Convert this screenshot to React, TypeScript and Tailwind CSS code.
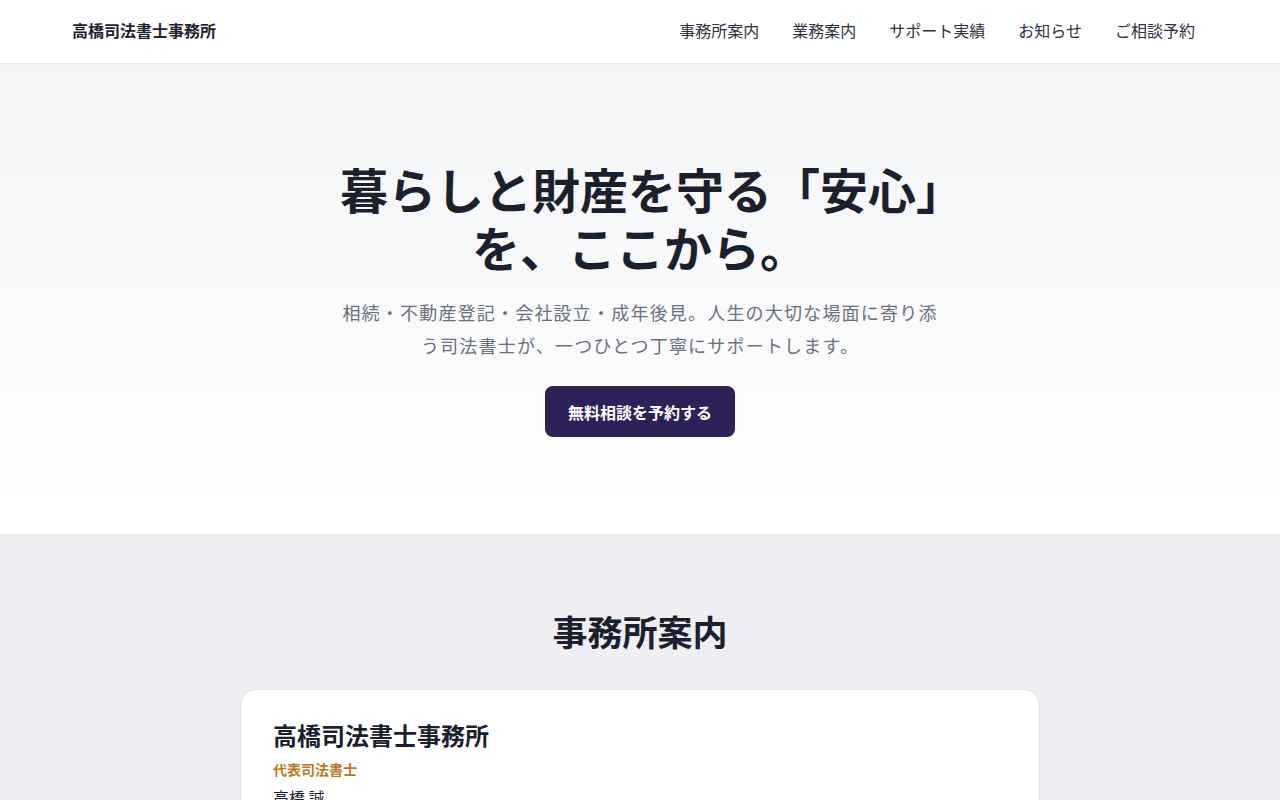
import React from "react";

export default function App() {
  const nav = ["事務所案内", "業務案内", "サポート実績", "お知らせ", "ご相談予約"];
  return (
    <div
      className="min-h-screen bg-white text-[#1c1f2e]"
      style={{ fontFamily: '"Noto Sans CJK JP", "Noto Sans", sans-serif' }}
    >
      <header className="h-16 bg-white border-b border-[#e5e7eb] flex items-center justify-between pl-[72px] pr-[85px] pb-1">
        <div className="text-base font-bold text-[#1f2330]">高橋司法書士事務所</div>
        <nav className="flex items-center gap-[33px]">
          {nav.map((n) => (
            <a key={n} className="text-base text-[#2d3140]" href="#">
              {n}
            </a>
          ))}
        </nav>
      </header>

      <section className="bg-gradient-to-b from-[#f3f4f6] to-white pt-[95px] pb-[97px] flex flex-col items-center">
        <div className="max-w-[606px] w-full flex flex-col items-center text-center">
          <h1 className="text-5xl leading-[58px] font-bold text-[#1c1f2e]">
            暮らしと財産を守る「安心」を、ここから。
          </h1>
          <p className="mt-[21px] max-w-[600px] text-[18px] tracking-[1.2px] leading-[33px] text-[#6b7080]">
            相続・不動産登記・会社設立・成年後見。人生の大切な場面に寄り添う司法書士が、一つひとつ丁寧にサポートします。
          </p>
          <button className="mt-6 bg-[#2e2157] text-white font-bold text-base px-[23px] py-[13.5px] rounded-lg leading-6">
            無料相談を予約する
          </button>
        </div>
      </section>

      <section className="bg-[#eeeef3] pt-[77px] pb-20 flex flex-col items-center">
        <h2 className="text-[35px] leading-[40px] font-bold text-[#1c1f2e]">事務所案内</h2>
        <div className="mt-[38px] w-[800px] bg-white border border-[#e3e4ea] rounded-2xl px-8 pt-[29px] pb-8">
          <h3 className="text-2xl leading-8 font-bold text-[#1c1f2e]">高橋司法書士事務所</h3>
          <div className="mt-[6px] text-sm leading-6 font-bold text-[#b7791f]">代表司法書士</div>
          <div className="mt-1 text-base leading-6 text-[#1c1f2e]">高橋 誠</div>
          <p className="mt-4 text-base leading-7 text-[#4b5060]">
            地域の皆さまの身近な法律家として、相続・登記・会社設立など幅広いご相談に対応しております。
          </p>
        </div>
      </section>
    </div>
  );
}
